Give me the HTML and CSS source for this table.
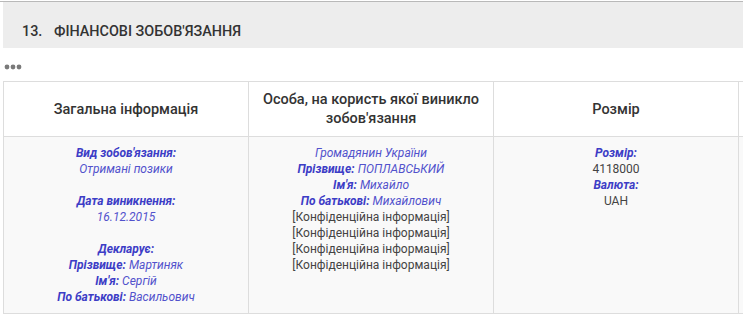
FILE: index.html
```html
<!DOCTYPE html>
<html lang="uk">
<head>
    <meta charset="UTF-8">
    <meta name="viewport" content="width=device-width, initial-scale=1.0">
    <title>Фінансові зобов'язання</title>
    <link rel="stylesheet" href="styles.css">
</head>
<body>
    <div class="page">
        <div class="section-title">
            <span class="section-num">13.</span>
            <span class="section-name">Фінансові зобов'язання</span>
        </div>

        <div class="more">
            <svg width="18" height="6" viewBox="0 0 18 6">
                <circle cx="3" cy="3" r="2.4" fill="#7a7a7a"/>
                <circle cx="9" cy="3" r="2.4" fill="#7a7a7a"/>
                <circle cx="15" cy="3" r="2.4" fill="#7a7a7a"/>
            </svg>
        </div>

        <table class="decl-table">
            <thead>
                <tr>
                    <th>Загальна інформація</th>
                    <th>Особа, на користь якої виникло зобов'язання</th>
                    <th>Розмір</th>
                    <th></th>
                </tr>
            </thead>
            <tbody>
                <tr>
                    <td>
                        <b>Вид зобов'язання:</b><br>
                        <i>Отримані позики</i><br>
                        <br>
                        <b>Дата виникнення:</b><br>
                        <i>16.12.2015</i><br>
                        <br>
                        <b>Декларує:</b><br>
                        <b>Прізвище:</b> <i>Мартиняк</i><br>
                        <b>Ім'я:</b> <i>Сергій</i><br>
                        <b>По батькові:</b> <i>Васильович</i>
                    </td>
                    <td>
                        <i>Громадянин України</i><br>
                        <b>Прізвище:</b> <i>ПОПЛАВСЬКИЙ</i><br>
                        <b>Ім'я:</b> <i>Михайло</i><br>
                        <b>По батькові:</b> <i>Михайлович</i><br>
                        [Конфіденційна інформація]<br>
                        [Конфіденційна інформація]<br>
                        [Конфіденційна інформація]<br>
                        [Конфіденційна інформація]
                    </td>
                    <td>
                        <b>Розмір:</b><br>
                        4118000<br>
                        <b>Валюта:</b><br>
                        UAH
                    </td>
                    <td></td>
                </tr>
            </tbody>
        </table>
    </div>
</body>
</html>
```

FILE: styles.css
```css
body {
    margin: 0;
    font-family: Roboto, "Noto Sans", sans-serif;
    color: #333;
    background: #fff;
}

.page {
    overflow: hidden;
    width: 743px;
    border-top: 1px solid #b9b9b9;
    margin-top: 1px;
}

.section-title {
    margin-left: 3px;
    height: 46px;
    padding: 21px 0 0 19px;
    box-sizing: border-box;
    background: #ededed;
    font-size: 14.4px;
    line-height: 17px;
    font-weight: 500;
    text-transform: uppercase;
    color: #333;
}

.section-num {
    margin-right: 8px;
}

.more {
    height: 29px;
    padding: 4px 0 0 4px;
    display: flex;
    align-items: center;
}

.decl-table {
    margin-left: 3px;
    border-collapse: collapse;
    table-layout: fixed;
    width: 981px;
    font-size: 12px;
}

.decl-table th,
.decl-table td {
    width: 245px;
    border: 1px solid #ddd;
    text-align: center;
}

.decl-table th {
    height: 55px;
    padding: 8px 12px;
    box-sizing: border-box;
    font-size: 14.5px;
    font-weight: 500;
    line-height: 19px;
    color: #333;
    background: #fff;
}

.decl-table td {
    vertical-align: top;
    padding: 8px 10px;
    line-height: 16px;
    background: #f9f9f9;
    color: #444;
}

.decl-table b {
    font-style: italic;
    font-weight: 700;
    color: #3d3dc6;
}

.decl-table i {
    color: #5252cc;
}
```
